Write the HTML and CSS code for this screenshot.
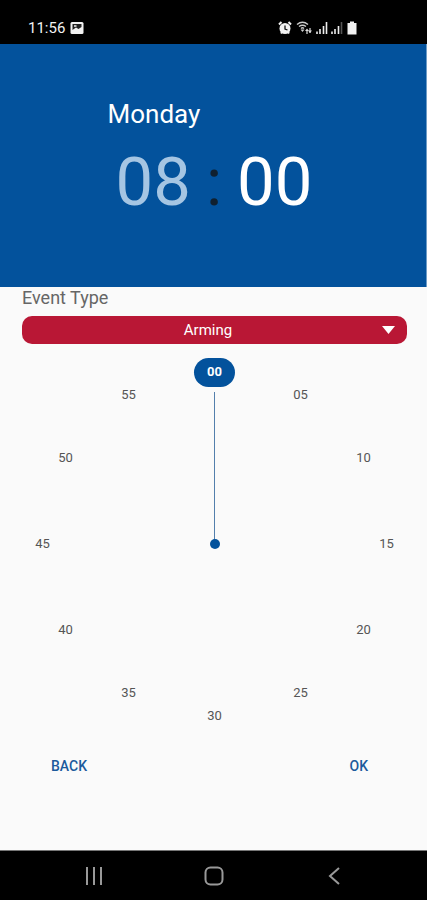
FILE: index.html
```html
<!DOCTYPE html>
<html lang="en">
<head>
<meta charset="utf-8">
<meta name="viewport" content="width=device-width, initial-scale=1">
<title>Schedule event</title>
<link rel="stylesheet" href="styles.css">
</head>
<body>
<div class="status">
  <div class="status-group">
    <span class="status-time">11:56</span>
    <svg width="14" height="14" viewBox="0 0 14 14" aria-hidden="true">
      <path d="M2 1H12Q13.500 1 13.500 2.500V11.500Q13.500 13 12 13H2Q0.500 13 0.500 11.500V2.500Q0.500 1 2 1Z" fill="#f2f2f2"/>
      <path d="M2.500 9V3H11.500V6L8.500 8L6 6.500Z" fill="#222"/>
      <path d="M4 4H6.500V6H4Z" fill="#bbb"/>
    </svg>
  </div>
  <div class="status-group status-icons">
    <svg width="14" height="14" viewBox="0 0 14 14" aria-hidden="true">
      <path d="M1 3.500L3.500 1M13 3.500L10.500 1M3 12.500L4 11M11 12.500L10 11" stroke="#f2f2f2" stroke-width="2"/>
      <circle cx="7" cy="7.500" r="5.500" fill="#f2f2f2"/>
      <path d="M7 4.500V8L9.500 9" fill="none" stroke="#111" stroke-width="1.300"/>
    </svg>
    <svg class="wifi" width="17" height="14" viewBox="0 0 17 14" aria-hidden="true">
      <path d="M1 3.500Q6.500 -1 12 3.500M3 5.500Q6.500 3 10 5.500M5 7.500Q6.500 6 8 7.500" fill="none" stroke="#ccc" stroke-width="1.400"/>
      <path d="M6.500 11L4.500 8.500H8.500Z" fill="#ccc"/>
      <path d="M11 13V9M14 7V12" stroke="#ddd" stroke-width="1.200"/>
      <path d="M9 10L11 7.500L13 10ZM12 9.500H16L14 12Z" fill="#ddd"/>
    </svg>
    <svg width="13" height="14" viewBox="0 0 13 14" aria-hidden="true">
      <path d="M2 13V10.500M5 13V8M8.500 13V5M11.500 13V1" stroke="#eee" stroke-width="1.600"/>
    </svg>
    <svg width="13" height="14" viewBox="0 0 13 14" aria-hidden="true">
      <path d="M2 13V10.500M5 13V8M8.500 13V5" stroke="#eee" stroke-width="1.600"/>
      <path d="M11.500 13V1" stroke="#555" stroke-width="1.600"/>
    </svg>
    <svg class="battery" width="10" height="14" viewBox="0 0 10 14" aria-hidden="true">
      <path d="M3 0.500H7V2H9.500V13.500H0.500V2H3Z" fill="#f2f2f2"/>
    </svg>
  </div>
</div>

<header class="header">
  <div class="summary">
    <h1 class="day">Monday</h1>
    <div class="time">
      <button class="digits digits-dim" type="button" aria-label="Hours">08</button>
      <span class="colon">:</span>
      <button class="digits" type="button" aria-label="Minutes">00</button>
    </div>
  </div>
</header>

<main class="content">
  <label class="label" for="event-type">Event Type</label>
  <div class="picker">
    <select class="select" id="event-type">
      <option>Arming</option>
    </select>
    <svg class="arrow" width="13" height="8" viewBox="0 0 13 8" aria-hidden="true"><path d="M0 0H13L6.500 8Z" fill="#fff"/></svg>
  </div>

  <div class="dial">
    <div class="hand"></div>
    <div class="pivot"></div>
    <button class="minute selected m00" type="button">00</button>
    <button class="minute m05" type="button">05</button>
    <button class="minute m10" type="button">10</button>
    <button class="minute m15" type="button">15</button>
    <button class="minute m20" type="button">20</button>
    <button class="minute m25" type="button">25</button>
    <button class="minute m30" type="button">30</button>
    <button class="minute m35" type="button">35</button>
    <button class="minute m40" type="button">40</button>
    <button class="minute m45" type="button">45</button>
    <button class="minute m50" type="button">50</button>
    <button class="minute m55" type="button">55</button>
  </div>

  <div class="actions">
    <button class="action" type="button">BACK</button>
    <button class="action" type="button">OK</button>
  </div>
</main>

<nav class="nav">
  <button class="nav-button" type="button" aria-label="Recent apps">
    <svg width="20" height="20" viewBox="0 0 20 20"><path d="M3 1V19M10 1V19M17 1V19" stroke="#999" stroke-width="2"/></svg>
  </button>
  <button class="nav-button" type="button" aria-label="Home">
    <svg width="20" height="20" viewBox="0 0 20 20"><rect x="1.500" y="1.500" width="17" height="17" rx="5" fill="none" stroke="#999" stroke-width="2"/></svg>
  </button>
  <button class="nav-button" type="button" aria-label="Back">
    <svg width="20" height="20" viewBox="0 0 20 20"><path d="M15 2L6 10L15 18" fill="none" stroke="#999" stroke-width="2"/></svg>
  </button>
</nav>
</body>
</html>
```
FILE: styles.css
```css
* {
  box-sizing: border-box;
}

body {
  margin: 0;
  min-height: 100vh;
  display: flex;
  flex-direction: column;
  background: #fafafa;
  color: #555;
  font-family: Roboto, sans-serif;
}

button {
  border: 0;
  padding: 0;
  background: none;
  color: inherit;
  font: inherit;
}

svg {
  display: block;
}

.status {
  height: 44px;
  padding: 12px 70px 0 28px;
  display: flex;
  align-items: center;
  justify-content: space-between;
  background: #000;
  color: #f2f2f2;
}

.status-group {
  display: flex;
  align-items: center;
  gap: 5px;
}

.status-icons {
  gap: 2px;
}

.status-time {
  font-size: 15px;
  line-height: 20px;
}

.wifi {
  margin-left: 2px;
}

.battery {
  margin-left: 2px;
}

.header {
  height: 243px;
  padding: 54px 0 0 2px;
  display: flex;
  justify-content: center;
  background: #03529c;
  border-right: 1px solid #6f9cc6;
  color: #fff;
}

.summary {
  display: flex;
  flex-direction: column;
}

.day {
  margin: 0 0 0 -8px;
  font-size: 26px;
  line-height: 32px;
  font-weight: 400;
}

.time {
  display: flex;
  gap: 15px;
  margin-top: 12px;
  font-size: 67px;
  line-height: 80px;
}

.digits-dim {
  color: #a5c5e3;
}

.colon {
  color: #10202f;
}

.content {
  flex: 1;
  padding: 1px 20px 0 22px;
  display: flex;
  flex-direction: column;
}

.label {
  font-size: 18px;
  line-height: 20px;
  color: #666;
}

.picker {
  display: grid;
  align-items: center;
  margin-top: 8px;
}

.select {
  grid-area: 1 / 1;
  appearance: none;
  width: 100%;
  height: 28px;
  padding: 0 13px 0 0;
  border: 0;
  border-radius: 10px;
  background: #b91735;
  color: #fff;
  font: 400 15px/20px Roboto, sans-serif;
  text-align: center;
  text-align-last: center;
}

.arrow {
  grid-area: 1 / 1;
  justify-self: end;
  margin-right: 12px;
  pointer-events: none;
}

.dial {
  --radius: min(calc(50vw - 41px), 172px);
  display: grid;
  place-items: center;
  height: calc(2 * var(--radius) + 28px);
  margin-top: 14px;
}

.hand,
.pivot,
.minute {
  grid-area: 1 / 1;
}

.hand {
  align-self: start;
  width: 1px;
  height: calc(var(--radius) - 20px);
  margin-top: 34px;
  background: #537fac;
}

.pivot {
  width: 10px;
  height: 10px;
  border-radius: 50%;
  background: #03529c;
}

.minute {
  font-size: 13px;
  line-height: 16px;
  transform: translate(calc(sin(var(--angle)) * var(--radius)), calc(cos(var(--angle)) * var(--radius) * -1));
}

.selected {
  width: 41px;
  height: 29px;
  border-radius: 15px;
  background: #03529c;
  color: #fff;
  font-weight: 700;
}

.m00 { --angle: 0deg; }
.m05 { --angle: 30deg; }
.m10 { --angle: 60deg; }
.m15 { --angle: 90deg; }
.m20 { --angle: 120deg; }
.m25 { --angle: 150deg; }
.m30 { --angle: 180deg; }
.m35 { --angle: 210deg; }
.m40 { --angle: 240deg; }
.m45 { --angle: 270deg; }
.m50 { --angle: 300deg; }
.m55 { --angle: 330deg; }

.actions {
  display: flex;
  justify-content: space-between;
  margin-top: 20px;
  padding: 0 39px 0 29px;
}

.action {
  height: 32px;
  font-size: 14px;
  font-weight: 500;
  color: #1c5a9c;
}

.nav {
  height: 50px;
  padding: 0 33px 0 34px;
  display: flex;
  align-items: center;
  background: #000;
  border-top: 1px solid #777;
}

.nav-button {
  flex: 1;
  display: flex;
  justify-content: center;
}
```
